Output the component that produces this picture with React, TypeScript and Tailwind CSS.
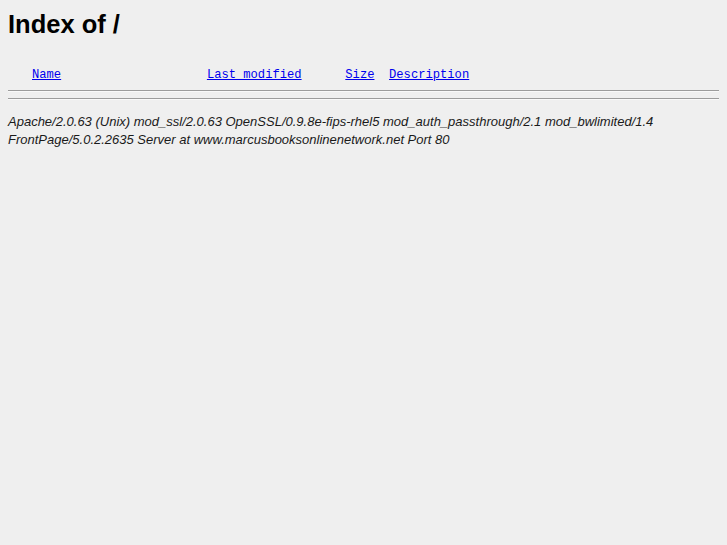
export default function App() {
  const columns = [
    { label: "Name", pad: 20 },
    { label: "Last modified", pad: 6 },
    { label: "Size", pad: 2 },
    { label: "Description", pad: 0 },
  ];

  return (
    <div className="min-h-[545px] bg-[#efefef] px-2 text-black">
      <h1 className="pt-[9px] text-[25.5px] font-bold leading-[30px] font-['Liberation_Sans',Arial,sans-serif]">
        Index of /
      </h1>
      <pre className="mt-[28px] text-[12.15px] leading-4 font-['Liberation_Mono','Courier_New',monospace] whitespace-pre">
        <span className="inline-block w-[24px]" />
        {columns.map((c) => (
          <span key={c.label}>
            <a href="#" className="text-[#0000ee] underline">
              {c.label}
            </a>
            {" ".repeat(c.pad)}
          </span>
        ))}
      </pre>
      <hr className="mt-[7px] h-[2px] border-0 border-t border-t-[#9c9c9c] border-b border-b-[#f9f9f9]" />
      <hr className="mt-[6px] h-[2px] border-0 border-t border-t-[#9c9c9c] border-b border-b-[#f9f9f9]" />
      <address className="mt-[13px] text-[13px] italic leading-[18px] text-[#1a1a1a] font-['Liberation_Sans',Arial,sans-serif]">
        Apache/2.0.63 (Unix) mod_ssl/2.0.63 OpenSSL/0.9.8e-fips-rhel5 mod_auth_passthrough/2.1 mod_bwlimited/1.4
        FrontPage/5.0.2.2635 Server at www.marcusbooksonlinenetwork.net Port 80
      </address>
    </div>
  );
}
